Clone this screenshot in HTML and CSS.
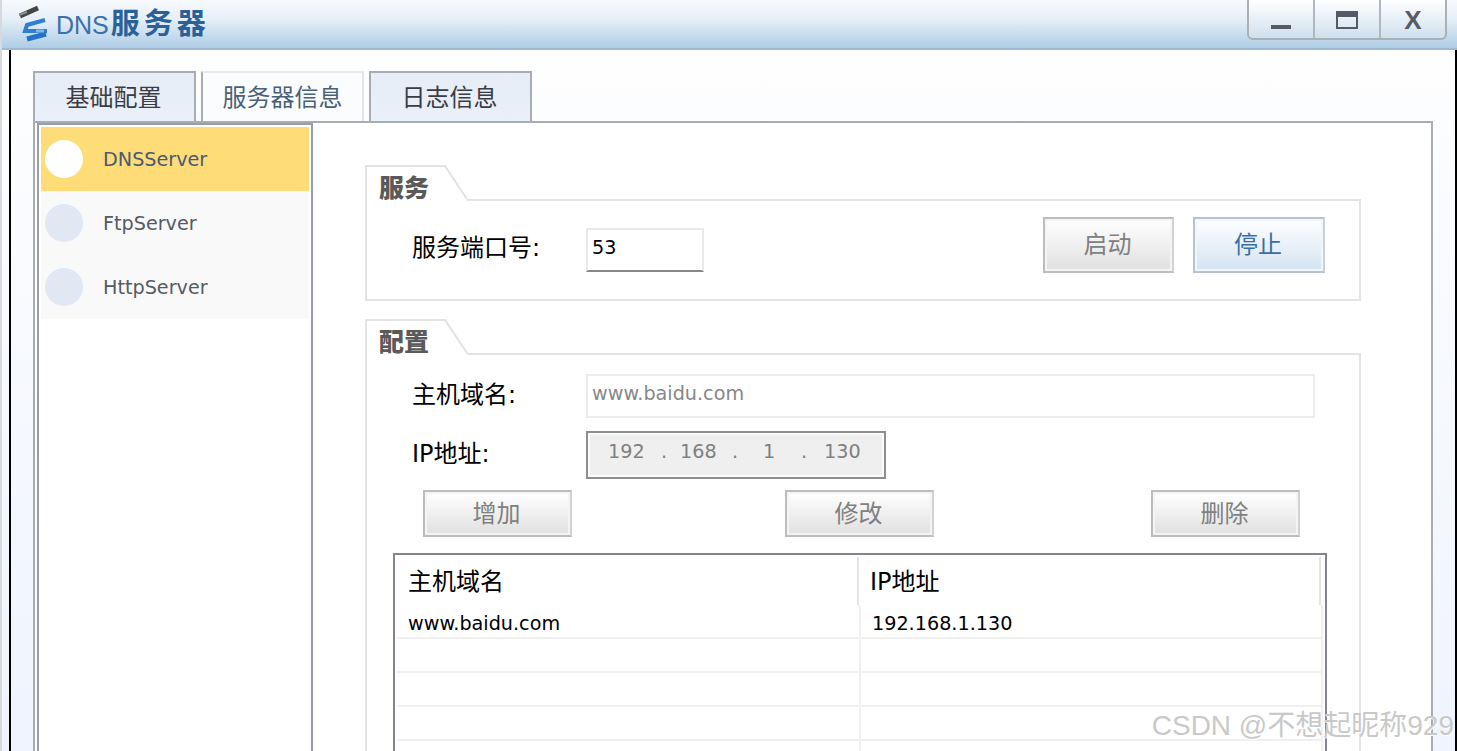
FILE: index.html
```html
<!DOCTYPE html>
<html lang="zh">
<head>
<meta charset="utf-8">
<title>DNS服务器</title>
<link rel="stylesheet" href="styles.css">
</head>
<body>
<div class="window">
  <header class="titlebar">
    <svg class="app-icon" width="32" height="38" viewBox="0 0 32 38">
      <path d="M2 12 L20 4" stroke="#454545" stroke-width="5" fill="none"/>
      <path d="M1 11 L9 8" stroke="#8f8f8f" stroke-width="2" fill="none"/>
      <path d="M27 16 L9 21 L7 27 L29 27" stroke="#2f7fd0" stroke-width="4" fill="none"/>
      <path d="M28 30 L9 35" stroke="#2472c8" stroke-width="5" fill="none"/>
      <path d="M18 27 L26 27" stroke="#7db8ea" stroke-width="3" fill="none"/>
    </svg>
    <h1 class="title"><span class="title-latin">DNS</span>服务器</h1>
    <div class="controls">
      <div class="control">
        <svg width="20" height="4" viewBox="0 0 20 4" class="icon-min"><rect width="20" height="4" fill="#555a66"/></svg>
      </div>
      <div class="control">
        <svg width="22" height="18" viewBox="0 0 22 18" class="icon-max"><rect x="1" y="1" width="20" height="16" fill="none" stroke="#555a66" stroke-width="2"/><rect width="22" height="6" fill="#555a66"/></svg>
      </div>
      <div class="control control-close">X</div>
    </div>
  </header>

  <div class="content">
    <nav class="tabs">
      <div class="tab">基础配置</div>
      <div class="tab tab-active">服务器信息</div>
      <div class="tab">日志信息</div>
    </nav>
    <section class="panel">
      <aside class="side">
        <div class="side-item side-item-on"><span class="dot"></span>DNSServer</div>
        <div class="side-item"><span class="dot"></span>FtpServer</div>
        <div class="side-item"><span class="dot"></span>HttpServer</div>
      </aside>
      <main class="main">
        <div class="group">
          <div class="group-head">
            <svg class="group-notch" width="104" height="36" viewBox="0 0 104 36">
              <path d="M1 36 V1 H80 L102 34 V36 Z" fill="#fff"/>
              <path d="M1 36 V1 H80 L102 34" fill="none" stroke="#e3e3e3" stroke-width="2"/>
            </svg>
            <span class="group-label">服务</span>
          </div>
          <div class="group-box service">
            <label class="field-label service-label">服务端口号:</label>
            <div class="input port">53</div>
            <div class="service-buttons">
              <div class="btn btn-start">启动</div>
              <div class="btn btn-start btn-blue">停止</div>
            </div>
          </div>
        </div>

        <div class="group group-config">
          <div class="group-head">
            <svg class="group-notch" width="104" height="36" viewBox="0 0 104 36">
              <path d="M1 36 V1 H80 L102 34 V36 Z" fill="#fff"/>
              <path d="M1 36 V1 H80 L102 34" fill="none" stroke="#e3e3e3" stroke-width="2"/>
            </svg>
            <span class="group-label">配置</span>
          </div>
          <div class="group-box config">
            <div class="form-row">
              <label class="field-label">主机域名:</label>
              <div class="input domain">www.baidu.com</div>
            </div>
            <div class="form-row form-row-ip">
              <label class="field-label">IP地址:</label>
              <div class="ip-box">
                <span class="ip-seg ip-a">192</span><span class="ip-seg ip-dot1">.</span><span class="ip-seg ip-b">168</span><span class="ip-seg ip-dot2">.</span><span class="ip-seg ip-c">1</span><span class="ip-seg ip-dot3">.</span><span class="ip-seg ip-d">130</span>
              </div>
            </div>
            <div class="action-row">
              <div class="btn btn-action">增加</div>
              <div class="btn btn-action">修改</div>
              <div class="btn btn-action btn-last">删除</div>
            </div>
            <div class="table">
              <div class="thead">
                <div class="th">主机域名</div>
                <div class="th th-ip">IP地址</div>
              </div>
              <div class="tr"><div class="td">www.baidu.com</div><div class="td">192.168.1.130</div></div>
              <div class="tr"><div class="td"></div><div class="td"></div></div>
              <div class="tr"><div class="td"></div><div class="td"></div></div>
              <div class="tr"><div class="td"></div><div class="td"></div></div>
              <div class="tr"><div class="td"></div><div class="td"></div></div>
            </div>
          </div>
        </div>
      </main>
    </section>
  </div>
</div>
<div class="watermark">CSDN @不想起昵称929</div>
</body>
</html>
```

FILE: styles.css
```css
* { box-sizing: border-box; }
html, body { margin: 0; height: 751px; overflow: hidden; }
body {
  position: relative;
  font-family: "DejaVu Sans", "Noto Sans CJK SC", sans-serif;
  font-size: 19.2px;
  color: #000;
}
.window {
  height: 751px;
  overflow: hidden;
  display: flex;
  flex-direction: column;
  background: linear-gradient(#ffffff 0, #f8fafe 300px, #eff4fe 100%);
  border-left: 2px solid #d4dae0;
}
.titlebar {
  height: 50px;
  flex: none;
  display: flex;
  align-items: flex-start;
  padding-left: 16px;
  background: linear-gradient(#f7fafd 0, #e6eff7 40%, #aecde6 100%);
  border-bottom: 2px solid #9fbad0;
}
.app-icon { margin-top: 4px; flex: none; }
.title {
  margin: 2px 0 0 6px;
  font-size: 29px;
  line-height: 38px;
  font-weight: 700;
  letter-spacing: 4px;
  color: #2b6199;
  font-family: "Noto Sans CJK SC", sans-serif;
}
.title-latin {
  font-family: "Liberation Sans", sans-serif;
  font-size: 25px;
  font-weight: 400;
  letter-spacing: 0;
  color: #3a70ac;
  margin-right: 2px;
}
.controls {
  margin-left: auto;
  margin-right: 10px;
  width: 200px;
  height: 40px;
  display: flex;
  border: 2px solid #aab0b4;
  border-top: 0;
  border-radius: 0 0 6px 6px;
  background: linear-gradient(#ffffff, #cfe0ef);
}
.control {
  flex: 1;
  display: flex;
  justify-content: center;
  position: relative;
  border-right: 2px solid #b0b8bf;
}
.control:last-child { border-right: 0; }
.icon-min { margin-top: 25px; }
.icon-max { margin-top: 11px; }
.control-close {
  font-family: "Liberation Sans", sans-serif;
  font-size: 26px;
  line-height: 40px;
  font-weight: 700;
  color: #595c66;
}
.content {
  flex: 1;
  min-height: 0;
  margin: 0 0 0 7px;
  padding: 21px 0 0 22px;
  display: flex;
  flex-direction: column;
  border-left: 2px solid #000;
  border-right: 2px solid #000;
}
.tabs { display: flex; gap: 5px; height: 50px; flex: none; }
.tab {
  width: 163px;
  height: 50px;
  padding-right: 2px;
  text-align: center;
  font-family: "Noto Sans CJK SC", sans-serif;
  font-size: 24px;
  line-height: 46px;
  color: #3a3d44;
  background: linear-gradient(#e6edf7, #eaf0f9);
  border: 2px solid #a9adb3;
  border-bottom: 0;
}
.tab-active {
  padding-right: 0;
  color: #4a5f78;
  background: #fbfcfe;
  border-top-color: #e6ebf1;
  border-right-color: #e0e5ec;
}
.panel {
  flex: 1;
  width: 1400px;
  min-height: 0;
  display: flex;
  background: #fff;
  border: 2px solid #a9adb3;
  border-bottom: 0;
}
.side {
  width: 276px;
  margin-left: 2px;
  flex: none;
  padding: 2px;
  border: 2px solid #9a9ea4;
  border-bottom: 0;
  background: #fff;
}
.side-item {
  height: 64px;
  display: flex;
  align-items: center;
  background: #f9f9f9;
  color: #555b66;
  padding-left: 4px;
}
.side-item-on { background: #fedd79; color: #4b5a70; }
.dot {
  width: 38px;
  height: 38px;
  border-radius: 50%;
  margin-right: 20px;
  background: #dfe8f3;
  flex: none;
}
.side-item-on .dot { background: #fff; }
.main { flex: none; width: 996px; margin-left: 52px; padding-top: 42px; }
.group-config { margin-top: 18px; }
.group-head {
  position: relative;
  height: 36px;
  width: 104px;
  margin-bottom: -2px;
  z-index: 1;
}
.group-notch { position: absolute; left: 0; top: 0; }
.group-label {
  position: relative;
  display: block;
  padding-left: 14px;
  font-family: "Noto Sans CJK SC", sans-serif;
  font-size: 25px;
  line-height: 42px;
  font-weight: 900;
  color: #5a5a5a;
}
.group-box { border: 2px solid #e3e3e3; }
.service {
  height: 102px;
  display: flex;
  align-items: flex-start;
  padding: 16px 34px 0 46px;
}
.field-label {
  display: block;
  width: 173px;
  flex: none;
  margin-left: -1px;
  margin-right: 1px;
  font-family: "DejaVu Sans", "Noto Sans CJK SC", sans-serif;
  font-size: 24px;
  color: #000;
}
.service-label { line-height: 62px; }
.input {
  background: #fff;
  border: 2px solid #e9e9e9;
  height: 44px;
  line-height: 36px;
  padding-left: 4px;
  flex: none;
}
.port {
  width: 118px;
  margin-top: 11px;
  border-bottom-color: #888;
}
.service-buttons { margin-left: auto; display: flex; gap: 19px; }
.btn {
  display: flex;
  align-items: center;
  justify-content: center;
  font-family: "Noto Sans CJK SC", sans-serif;
  font-size: 24px;
  color: #808080;
  background: linear-gradient(#ffffff, #e0e0e0);
  border: 2px solid #bdbdbd;
  border-right-color: #d2d2d2;
  box-shadow: inset 0 0 0 2px #f4f4f4;
  padding-right: 2px;
}
.btn-start { width: 131px; height: 56px; padding-bottom: 6px; }
.btn-blue {
  width: 132px;
  color: #3a6ea8;
  background: linear-gradient(#ffffff, #d3e3f2);
  border-color: #b9c3d0;
  border-right-color: #c8d0da;
  box-shadow: inset 0 0 0 2px #f2f6fb;
}
.config { height: 500px; padding: 19px 0 0 46px; }
.form-row { display: flex; align-items: center; height: 44px; }
.form-row .field-label { padding-bottom: 8px; }
.domain { width: 729px; color: #888; line-height: 35px; border-color: #ececec; }
.form-row-ip { margin-top: 13px; height: 48px; }
.ip-box {
  position: relative;
  width: 300px;
  height: 48px;
  background: #efefef;
  border: 2px solid #8e8e8e;
  box-shadow: inset 0 0 0 2px #fbfbfb;
  color: #808080;
  line-height: 38px;
}
.ip-seg { position: absolute; top: 0; }
.ip-a { left: 20px; }
.ip-dot1 { left: 73px; }
.ip-b { left: 92px; }
.ip-dot2 { left: 144px; }
.ip-c { left: 175px; }
.ip-dot3 { left: 213px; }
.ip-d { left: 236px; }
.action-row { display: flex; gap: 213px; margin: 11px 0 0 10px; }
.btn-action { width: 149px; height: 47px; padding-bottom: 4px; }
.btn-last { margin-left: 4px; }
.table {
  width: 934px;
  height: 300px;
  margin: 16px 0 0 -20px;
  border: 2px solid #82858f;
  border-bottom: 0;
}
.thead { display: flex; height: 50px; padding-top: 2px; }
.th {
  width: 464px;
  padding-left: 13px;
  font-family: "DejaVu Sans", "Noto Sans CJK SC", sans-serif;
  font-size: 24px;
  line-height: 50px;
  border-right: 2px solid #e4e4e4;
}
.th-ip { width: 462px; padding-left: 11px; }
.tr { display: flex; height: 34px; margin-left: 2px; }
.td {
  width: 464px;
  padding: 2px 0 0 11px;
  line-height: 34px;
  border-right: 2px solid #f0f0f0;
  border-bottom: 2px solid #f0f0f0;
}
.td + .td { width: 462px; }
.watermark {
  position: absolute;
  right: 3px;
  top: 706px;
  font-family: "Liberation Sans", "Noto Sans CJK SC", sans-serif;
  font-size: 28px;
  line-height: 40px;
  white-space: nowrap;
  color: #c9c9c9;
  text-shadow: 1px 1px 1px #fff;
}
```
